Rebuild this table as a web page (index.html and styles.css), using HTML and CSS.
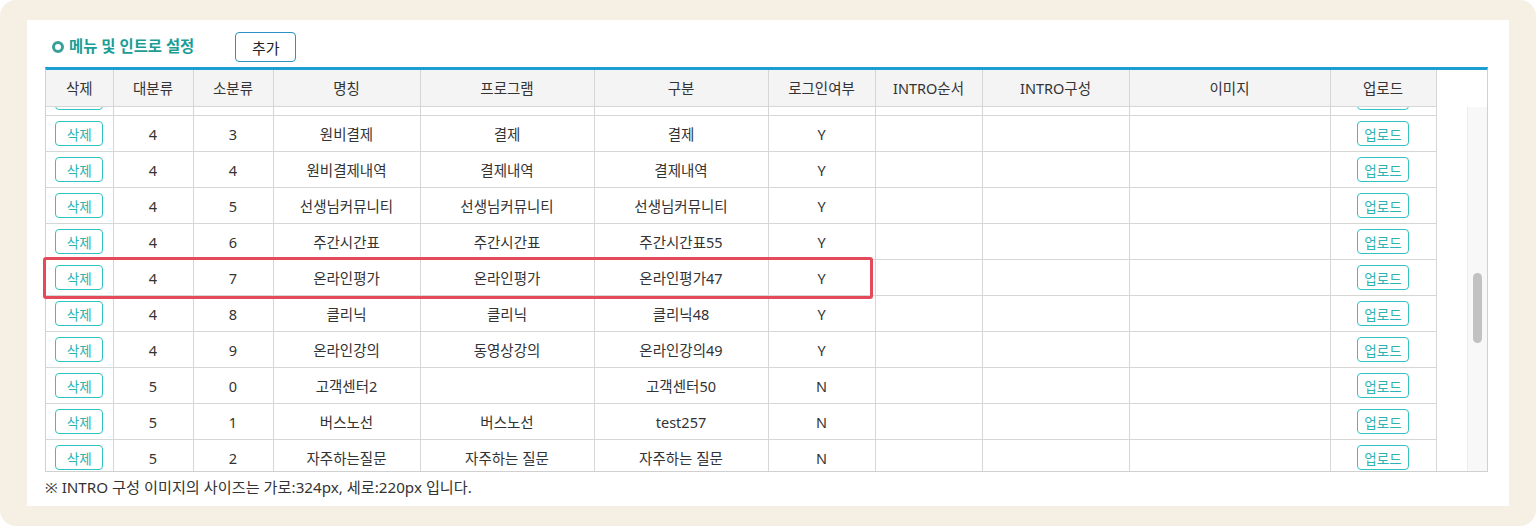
FILE: index.html
```html
<!DOCTYPE html>
<html lang="ko">
<head>
<meta charset="utf-8">
<title>메뉴 및 인트로 설정</title>
<link rel="stylesheet" href="styles.css">
</head>
<body>
<div class="frame">
  <div class="panel">
    <div class="title-row">
      <h2 class="title"><span class="ring"></span>메뉴 및 인트로 설정</h2>
      <button class="add-btn" type="button">추가</button>
    </div>
    <div class="grid">
      <div class="head">
        <table class="tbl">
          <colgroup>
            <col class="c1"><col class="c2"><col class="c3"><col class="c4"><col class="c5"><col class="c6"><col class="c7"><col class="c8"><col class="c9"><col class="c10"><col class="c11">
          </colgroup>
          <thead>
            <tr><th>삭제</th><th>대분류</th><th>소분류</th><th>명칭</th><th>프로그램</th><th>구분</th><th>로그인여부</th><th>INTRO순서</th><th>INTRO구성</th><th>이미지</th><th>업로드</th></tr>
          </thead>
        </table>
      </div>
      <div class="body-area">
        <div class="scroll" id="scroller">
          <table class="tbl">
            <colgroup>
              <col class="c1"><col class="c2"><col class="c3"><col class="c4"><col class="c5"><col class="c6"><col class="c7"><col class="c8"><col class="c9"><col class="c10"><col class="c11">
            </colgroup>
            <tbody id="rows">
              <tr><td><button class="btn" type="button">삭제</button></td><td>4</td><td>3</td><td>원비결제</td><td>결제</td><td>결제</td><td>Y</td><td></td><td></td><td></td><td><button class="btn up" type="button">업로드</button></td></tr>
              <tr><td><button class="btn" type="button">삭제</button></td><td>4</td><td>4</td><td>원비결제내역</td><td>결제내역</td><td>결제내역</td><td>Y</td><td></td><td></td><td></td><td><button class="btn up" type="button">업로드</button></td></tr>
              <tr><td><button class="btn" type="button">삭제</button></td><td>4</td><td>5</td><td>선생님커뮤니티</td><td>선생님커뮤니티</td><td>선생님커뮤니티</td><td>Y</td><td></td><td></td><td></td><td><button class="btn up" type="button">업로드</button></td></tr>
              <tr><td><button class="btn" type="button">삭제</button></td><td>4</td><td>6</td><td>주간시간표</td><td>주간시간표</td><td>주간시간표55</td><td>Y</td><td></td><td></td><td></td><td><button class="btn up" type="button">업로드</button></td></tr>
              <tr><td><button class="btn" type="button">삭제</button></td><td>4</td><td>7</td><td>온라인평가</td><td>온라인평가</td><td>온라인평가47</td><td>Y</td><td></td><td></td><td></td><td><button class="btn up" type="button">업로드</button></td></tr>
              <tr><td><button class="btn" type="button">삭제</button></td><td>4</td><td>8</td><td>클리닉</td><td>클리닉</td><td>클리닉48</td><td>Y</td><td></td><td></td><td></td><td><button class="btn up" type="button">업로드</button></td></tr>
              <tr><td><button class="btn" type="button">삭제</button></td><td>4</td><td>9</td><td>온라인강의</td><td>동영상강의</td><td>온라인강의49</td><td>Y</td><td></td><td></td><td></td><td><button class="btn up" type="button">업로드</button></td></tr>
              <tr><td><button class="btn" type="button">삭제</button></td><td>5</td><td>0</td><td>고객센터2</td><td></td><td>고객센터50</td><td>N</td><td></td><td></td><td></td><td><button class="btn up" type="button">업로드</button></td></tr>
              <tr><td><button class="btn" type="button">삭제</button></td><td>5</td><td>1</td><td>버스노선</td><td>버스노선</td><td>test257</td><td>N</td><td></td><td></td><td></td><td><button class="btn up" type="button">업로드</button></td></tr>
              <tr><td><button class="btn" type="button">삭제</button></td><td>5</td><td>2</td><td>자주하는질문</td><td>자주하는 질문</td><td>자주하는 질문</td><td>N</td><td></td><td></td><td></td><td><button class="btn up" type="button">업로드</button></td></tr>
            </tbody>
          </table>
        </div>
        <div class="vbar"><div class="thumb" style="margin-top: 166px; height: 70px;"></div></div>
      </div>
    </div>
    <p class="note">※ INTRO 구성 이미지의 사이즈는 가로:324px, 세로:220px 입니다.</p>
    <div class="mark"></div>
  </div>
</div>
<script src="script.js"></script>
</body>
</html>
```

FILE: styles.css
```css
html, body {
  margin: 0;
  height: 526px;
  overflow: hidden;
}
body {
  background: #ffffff;
  font-family: "Noto Sans", "Noto Sans CJK KR", sans-serif;
  color: #333333;
}
.frame {
  height: 526px;
  box-sizing: border-box;
  background: #f6efe4;
  border-radius: 16px;
  padding: 20px 27px;
}
.panel {
  position: relative;
  height: 100%;
  box-sizing: border-box;
  background: #ffffff;
  padding: 12px 21px 0 18px;
}
.title-row {
  display: flex;
  align-items: center;
  height: 30px;
}
.title {
  display: flex;
  align-items: center;
  gap: 5px;
  margin: 0 0 0 7px;
  font-size: 15.4px;
  font-weight: 700;
  color: #1b9d95;
  line-height: 1;
}
.ring {
  width: 12px;
  height: 12px;
  box-sizing: border-box;
  border-radius: 50%;
  border: 3.5px solid #3a9e99;
}
.add-btn {
  margin-left: 41px;
  width: 61px;
  height: 30px;
  border: 1px solid #2b90c4;
  border-radius: 4px;
  background: #ffffff;
  color: #222222;
  font-family: inherit;
  font-size: 15px;
  padding: 0;
}
.grid {
  margin-top: 5px;
  border: 1px solid #d0d0d0;
  border-top: 3px solid #1c9ed3;
}
.head {
  background: #ffffff;
}
.tbl {
  width: 1390px;
  table-layout: fixed;
  border-collapse: collapse;
}
.c1 { width: 67px; }
.c2 { width: 80px; }
.c3 { width: 80px; }
.c4 { width: 147px; }
.c5 { width: 174px; }
.c6 { width: 174px; }
.c7 { width: 107px; }
.c8 { width: 107px; }
.c9 { width: 147px; }
.c10 { width: 201px; }
.c11 { width: 106px; }
.tbl tr {
  height: 36px;
}
.tbl th,
.tbl td {
  padding: 0;
  text-align: center;
  font-size: 14.5px;
  color: #333333;
  border-right: 1px solid #d6d6d6;
  border-bottom: 1px solid #d6d6d6;
}
.tbl th {
  background: #f4f4f4;
  font-weight: 400;
}
.body-area {
  display: flex;
  height: 364px;
}
.scroll {
  flex: 1;
  overflow: hidden;
}
.vbar {
  width: 20px;
  flex: none;
  box-sizing: border-box;
  background: #f8f8f8;
  border-left: 1px solid #ededed;
}
.thumb {
  width: 9px;
  margin-left: 5px;
  border-radius: 5px;
  background: #c2c2c2;
}
.btn {
  width: 48px;
  height: 25px;
  padding: 0;
  border: 1px solid #30c3c0;
  border-radius: 4px;
  background: #ffffff;
  color: #2bb4b1;
  font-family: inherit;
  font-size: 13.5px;
  vertical-align: middle;
}
.btn.up {
  width: 52px;
}
.note {
  margin: 3px 0 0 0;
  font-size: 15.2px;
  color: #333333;
}
.mark {
  position: absolute;
  left: 16px;
  top: 237px;
  width: 830px;
  height: 42px;
  box-sizing: border-box;
  border: 3px solid #e54a5b;
  border-radius: 3px;
}
```

FILE: script.js
```js
(function () {
  var tbody = document.getElementById('rows');
  var names = ['학원소개', '인사말', '강사소개', '오시는길', '공지사항', '학원소식', '갤러리', '입학안내', '수강신청',
    '커리큘럼', '초등과정', '중등과정', '고등과정', '특강안내', '시험일정', '성적조회', '출결현황', '상담신청',
    '자료실', '학습자료', '문제은행', '알림장', '학부모게시판', '이벤트', '설문조사', '포토앨범', '동영상',
    '차량안내', '교재안내', '합격자발표', 'FAQ', '개인정보', '이용약관', '사이트맵', '로그인', '회원가입',
    '마이페이지', '쪽지함', '캘린더', '수업후기', '칭찬게시판'];
  var idx = 0;
  function row(big, small) {
    var name = names[idx % names.length];
    idx++;
    var tr = document.createElement('tr');
    var cells = ['', String(big), String(small), name, name, name, big < 4 ? 'N' : 'Y', '', '', '', ''];
    cells.forEach(function (text, i) {
      var td = document.createElement('td');
      if (i === 0 || i === 10) {
        var b = document.createElement('button');
        b.type = 'button';
        b.className = i === 0 ? 'btn' : 'btn up';
        b.textContent = i === 0 ? '삭제' : '업로드';
        td.appendChild(b);
      } else {
        td.textContent = text;
      }
      tr.appendChild(td);
    });
    return tr;
  }
  var before = [];
  var s;
  for (s = 0; s <= 8; s++) before.push([1, s]);
  for (s = 0; s <= 9; s++) before.push([2, s]);
  for (s = 0; s <= 1; s++) before.push([3, s]);
  for (s = 0; s <= 2; s++) before.push([4, s]);
  var first = tbody.firstElementChild;
  before.forEach(function (p) { tbody.insertBefore(row(p[0], p[1]), first); });
  var after = [];
  for (s = 3; s <= 9; s++) after.push([5, s]);
  for (s = 0; s <= 9; s++) after.push([6, s]);
  after.push([7, 0]);
  after.forEach(function (p) { tbody.appendChild(row(p[0], p[1])); });
  document.getElementById('scroller').scrollTop = 855;
})();
```
